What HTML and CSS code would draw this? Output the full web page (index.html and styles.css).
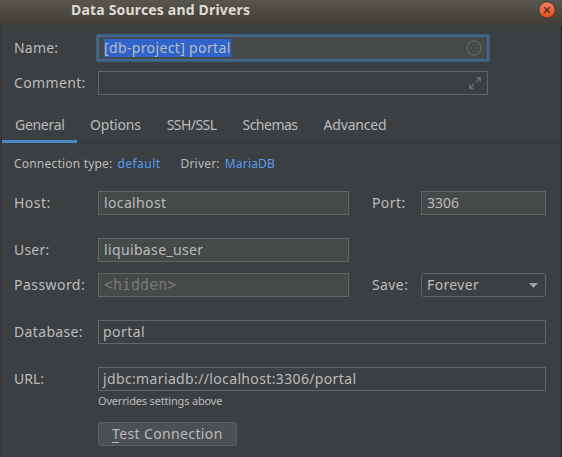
FILE: index.html
```
<!DOCTYPE html>
<html lang="en">
<head>
<meta charset="utf-8">
<title>Data Sources and Drivers</title>
<link rel="stylesheet" href="styles.css">
</head>
<body>
<div class="dialog">
  <header class="titlebar">
    <span class="title">Data Sources and Drivers</span>
    <svg class="close" width="18" height="18" viewBox="0 0 18 18">
      <defs><linearGradient id="orange" x1="0" y1="0" x2="0" y2="1"><stop offset="0" stop-color="#f18362"/><stop offset="1" stop-color="#df4a16"/></linearGradient></defs>
      <circle cx="9" cy="9" r="8.2" fill="url(#orange)" stroke="#35342f" stroke-width="1"/>
      <path d="M6.3 6.3 11.7 11.7M11.7 6.3 6.3 11.7" stroke="#4b2b1d" stroke-width="1.3"/>
    </svg>
  </header>
  <main class="content">
    <div class="row name-row">
      <label class="label name-label">Name:</label>
      <div class="field top focused"><span class="selection">[db-project] portal</span>
        <svg class="ring" width="16" height="16" viewBox="0 0 16 16"><circle cx="8" cy="8" r="7" fill="none" stroke="#6e7173"/></svg>
      </div>
    </div>
    <div class="row comment-row">
      <label class="label comment-label">Comment:</label>
      <div class="field top plain">
        <svg class="expand" width="12" height="12" viewBox="0 0 12 12"><path d="M7 0H12V5ZM0 7V12H5Z" fill="#676b6d"/><path d="M10.5 1.5 7 5M5 7 1.5 10.5" stroke="#676b6d" stroke-width="1.4"/></svg>
      </div>
    </div>
    <nav class="tabs">
      <span class="tab active">General</span>
      <span class="tab options">Options</span>
      <span class="tab ssh">SSH/SSL</span>
      <span class="tab schemas">Schemas</span>
      <span class="tab advanced">Advanced</span>
    </nav>
    <div class="links">
      <span class="kind">Connection type:</span><a class="link default">default</a>
      <span class="driver">Driver:</span><a class="link maria">MariaDB</a>
    </div>
    <div class="row host-row">
      <label class="label host-label">Host:</label>
      <div class="field half"><span class="host">localhost</span></div>
      <label class="side port-label">Port:</label>
      <div class="field small"><span class="port">3306</span></div>
    </div>
    <div class="row user-row">
      <label class="label user-label">User:</label>
      <div class="field half"><span class="user">liquibase_user</span></div>
    </div>
    <div class="row password-row">
      <label class="label password-label">Password:</label>
      <div class="field half"><span class="hidden">&lt;hidden&gt;</span></div>
      <label class="side save-label">Save:</label>
      <div class="field small select"><span class="forever">Forever</span>
        <svg class="arrow" width="9" height="5" viewBox="0 0 9 5"><path d="M0 0H9L4.5 5Z" fill="#a0a3a5"/></svg>
      </div>
    </div>
    <div class="row database-row">
      <label class="label database-label">Database:</label>
      <div class="field wide plain"><span class="database">portal</span></div>
    </div>
    <div class="row url-row">
      <label class="label url-label">URL:</label>
      <div class="field wide plain"><span class="url">jdbc:mariadb://localhost:3306/portal</span></div>
    </div>
    <div class="hint">Overrides settings above</div>
    <button class="test" type="button"><span class="mnemonic">T</span>est Connection</button>
  </main>
</div>
</body>
</html>
```
FILE: styles.css
```
* { box-sizing: border-box; }
body { margin: 0; width: 562px; height: 457px; overflow: hidden; background: #3c3f41; color: #bbbbbb; font: 14px/20px "Noto Sans", sans-serif; white-space: nowrap; }
.dialog { height: 457px; display: flex; flex-direction: column; }
.titlebar { height: 25px; flex: none; display: flex; align-items: flex-start; background: linear-gradient(#59564e, #3e3d36); color: #dfdbd2; }
.title { margin-left: 71px; font-size: 14px; font-weight: 700; letter-spacing: 0.18px; }
.close { margin: 1px 6px 0 auto; }
.content { flex: 1; border-left: 1px solid #2e3133; border-right: 1px solid #242628; margin-left: 1px; }
.row { display: flex; align-items: center; height: 24px; padding-left: 12px; }
.label { width: 84px; flex: none; letter-spacing: 0.35px; }
.field { height: 24px; flex: none; display: flex; align-items: center; border: 1px solid #646464; background: #45494a; padding: 0 5px; letter-spacing: 0.36px; }
.plain { background: #3c3f41; }
.top { width: 390px; }
.half { width: 251px; }
.wide { width: 448px; padding-left: 4px; }
.small { width: 125px; }
.side { margin-left: 23px; width: 49px; flex: none; letter-spacing: 0.4px; }
.name-row { margin-top: 11px; }
.comment-row { margin-top: 11px; }
.focused { border-color: #466d94; box-shadow: 0 0 0 2px #3d6185; border-radius: 1px; }
.selection { background: #2f65ca; height: 18px; line-height: 18px; }
.ring { margin-left: auto; }
.expand { margin-left: auto; margin-right: 1px; }
.tabs { height: 48px; display: flex; align-items: flex-end; border-bottom: 1px solid #323537; }
.tab { height: 33px; line-height: 31px; margin-right: 26px; letter-spacing: -0.2px; }
.active { width: 75px; padding-left: 13px; margin-right: 13px; border-bottom: 3px solid #4a88c7; margin-bottom: -1px; line-height: 29px; letter-spacing: -0.3px; }
.ssh { letter-spacing: -0.55px; }
.schemas { letter-spacing: -0.5px; }
.links { display: flex; margin-top: 11px; padding-left: 12px; font-size: 12px; letter-spacing: 0.2px; }
.link { color: #589df6; margin-left: 5px; }
.default { letter-spacing: 0.45px; }
.driver { margin-left: 20px; }
.host-row { margin-top: 17px; }
.user-row { margin-top: 23px; }
.user-label, .name-label { letter-spacing: 0.2px; }
.url-label, .port { letter-spacing: 0; }
.password-label, .host-label, .database { letter-spacing: 0.45px; }
.password-row { margin-top: 11px; }
.database-row { margin-top: 23px; }
.url-row { margin-top: 23px; }
.hidden { font: 15px/20px "DejaVu Sans Mono", monospace; color: #787878; letter-spacing: 0; }
.select { background: #3c3f41; border-radius: 3px; }
.arrow { margin-left: auto; margin-right: 2px; }
.hint { margin-left: 96px; font-size: 11px; height: 21px; letter-spacing: -0.18px; }
.test { display: block; margin: 10px 0 0 96px; width: 139px; height: 24px; padding: 0 0 0 13px; text-align: left; border: 1px solid #5e6060; border-radius: 3px; background: #4c5052; color: #bbbbbb; font: 14px/20px "Noto Sans", sans-serif; letter-spacing: 0.37px; }
.mnemonic { text-decoration: underline; text-underline-offset: 3px; }
```
